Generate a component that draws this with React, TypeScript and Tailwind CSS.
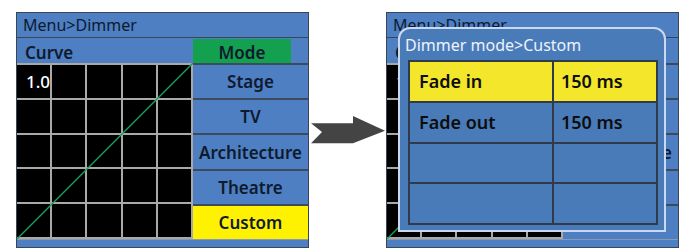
import React from "react";

const FONT = { fontFamily: '"Noto Sans", "Open Sans", sans-serif' };

function Screen({ highlight, children }: { highlight: boolean; children?: React.ReactNode }) {
  const modes = ["Stage", "TV", "Architecture", "Theatre", "Custom"];
  return (
    <div className="relative flex h-[236px] w-[293px] flex-col border border-[#3a4656] bg-[#4d7fc2] text-[#0f1a2e]">
      <div className="flex h-[25px] items-center border-b border-[#3a4656] pl-[6px] text-[16px] leading-none">
        Menu&gt;Dimmer
      </div>
      <div className="flex h-[25px] items-end">
        <div className="w-[176px] pb-[2px] pl-[8px] text-[17px] font-semibold leading-none">Curve</div>
        <div className="flex h-[24px] w-[98px] items-end justify-center bg-[#13a04f] pb-[2px] text-[17px] font-semibold leading-none">
          Mode
        </div>
      </div>
      <div className="flex h-[176px]">
        <div className="relative h-full w-[176px] bg-[#a9a9a9] py-[2px] pr-[2px]">
          <div className="grid h-full grid-cols-5 grid-rows-5 gap-[2px]">
            {Array.from({ length: 25 }).map((_, i) => (
              <div key={i} className="flex items-center bg-black pl-[9px] text-[17px] font-medium leading-none text-white">
                {i === 0 ? "1.0" : ""}
              </div>
            ))}
          </div>
          <svg className="absolute inset-0" width="176" height="176" viewBox="0 0 176 176">
            <line x1="0" y1="176" x2="176" y2="0" stroke="#1f9b5a" strokeWidth="1.4" />
          </svg>
        </div>
        <div className="flex flex-1 flex-col gap-[2px] bg-[#3b4a5e] pt-[2px]">
          {modes.map((m) => (
            <div
              key={m}
              className={
                "flex flex-1 items-center justify-center text-[17px] font-semibold leading-none " +
                (highlight && m === "Custom" ? "bg-[#fff200]" : "bg-[#4d7fc2]")
              }
            >
              {m}
            </div>
          ))}
        </div>
      </div>
      <div className="flex-1 border-t border-[#8a9aae]" />
      {children}
    </div>
  );
}

function Dialog() {
  const rows = [
    ["Fade in", "150 ms"],
    ["Fade out", "150 ms"],
    ["", ""],
    ["", ""],
  ];
  return (
    <div className="absolute left-[11px] top-[14px] flex h-[205px] w-[268px] flex-col rounded-t-[12px] border-2 border-[#cad9ef] bg-[#4a7bb9]">
      <div className="flex h-[31px] items-center pl-[5px] text-[16px] leading-none text-[#eef3fb]">Dimmer mode&gt;Custom</div>
      <div className="ml-[8px] grid h-[165px] w-[250px] grid-cols-[142px_1fr] grid-rows-4 gap-[2px] bg-[#2f3b4a] p-[2px]">
        {rows.map((r, i) =>
          r.map((c, j) => (
            <div
              key={i + "-" + j}
              className={
                "flex items-center text-[18px] font-semibold leading-none text-[#0d0d0d] " +
                (j === 0 ? "pl-[9px] " : "pl-[7px] ") +
                (i === 0 ? "bg-[#f3e62b]" : "bg-[#4a7bb9]")
              }
            >
              {c}
            </div>
          ))
        )}
      </div>
    </div>
  );
}

export default function App() {
  return (
    <div className="flex h-[249px] w-[686px] items-start bg-white pl-[16px] pt-[12px]" style={FONT}>
      <Screen highlight />
      <svg className="mt-[102px]" width="77" height="32" viewBox="0 0 77 32">
        <polygon points="2,9.3 44,9.3 44,2 76,16.7 44,29.3 2,29.3 13,18" fill="#444444" />
      </svg>
      <Screen highlight={false}>
        <Dialog />
      </Screen>
    </div>
  );
}
